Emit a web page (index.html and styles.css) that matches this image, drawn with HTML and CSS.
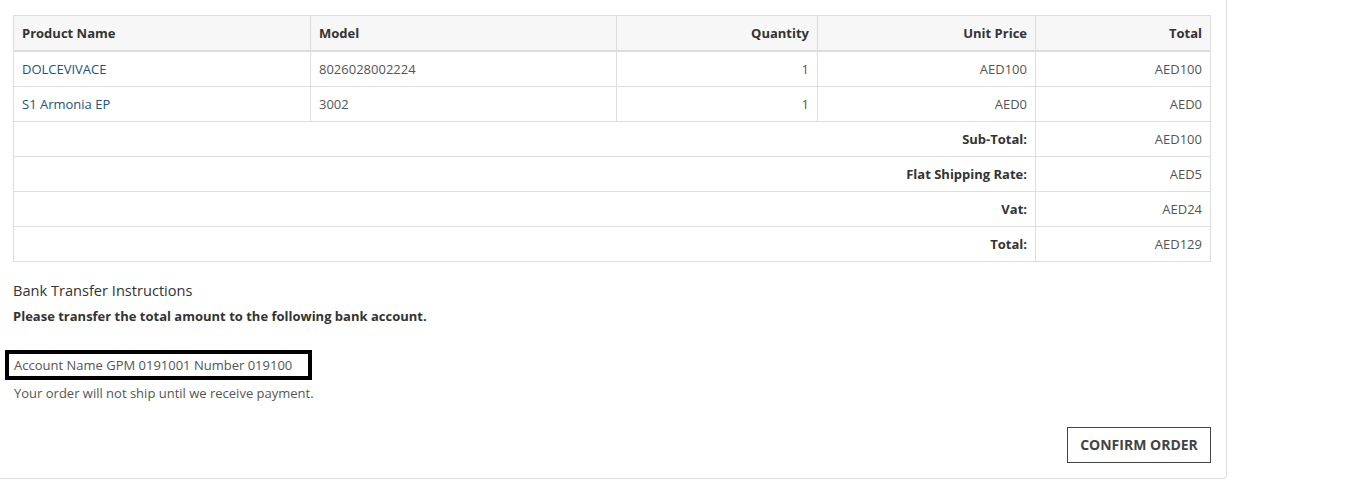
FILE: index.html
```html
<!DOCTYPE html>
<html>
<head>
<meta charset="utf-8">
<link rel="stylesheet" href="styles.css">
</head>
<body>
<div class="panel">
  <table class="cart">
    <colgroup>
      <col class="c1"><col class="c2"><col class="c3"><col class="c4"><col class="c5">
    </colgroup>
    <thead>
      <tr>
        <th class="left">Product Name</th>
        <th class="left">Model</th>
        <th class="right">Quantity</th>
        <th class="right">Unit Price</th>
        <th class="right">Total</th>
      </tr>
    </thead>
    <tbody>
      <tr>
        <td class="left"><a href="#">DOLCEVIVACE</a></td>
        <td class="left">8026028002224</td>
        <td class="right">1</td>
        <td class="right">AED100</td>
        <td class="right">AED100</td>
      </tr>
      <tr>
        <td class="left"><a href="#">S1 Armonia EP</a></td>
        <td class="left">3002</td>
        <td class="right">1</td>
        <td class="right">AED0</td>
        <td class="right">AED0</td>
      </tr>
    </tbody>
    <tfoot>
      <tr><td colspan="4" class="right"><b>Sub-Total:</b></td><td class="right">AED100</td></tr>
      <tr><td colspan="4" class="right"><b>Flat Shipping Rate:</b></td><td class="right">AED5</td></tr>
      <tr><td colspan="4" class="right"><b>Vat:</b></td><td class="right">AED24</td></tr>
      <tr><td colspan="4" class="right"><b>Total:</b></td><td class="right">AED129</td></tr>
    </tfoot>
  </table>
  <h2 class="bank-title">Bank Transfer Instructions</h2>
  <p class="bank-lead">Please transfer the total amount to the following bank account.</p>
  <div class="account-box">Account Name GPM 0191001 Number 019100</div>
  <p class="note">Your order will not ship until we receive payment.</p>
  <div class="actions">
    <button class="confirm" type="button">CONFIRM ORDER</button>
  </div>
</div>
</body>
</html>
```

FILE: styles.css
```css
* { box-sizing: border-box; }
html, body { margin: 0; padding: 0; background: #fff; }
body {
  font-family: "Open Sans", "Liberation Sans", sans-serif;
  font-size: 13px;
  color: #555;
}
.panel {
  width: 1227px;
  padding: 15px 15px 15px 13px;
  border-right: 1px solid #ddd;
  border-bottom: 1px solid #ddd;
  border-bottom-right-radius: 4px;
}
.cart {
  width: 1197px;
  border-collapse: collapse;
  border: 1px solid #ddd;
  table-layout: fixed;
}
.c1 { width: 297px; }
.c2 { width: 306px; }
.c3 { width: 201px; }
.c4 { width: 218px; }
.c5 { width: 175px; }
.cart th, .cart td {
  border: 1px solid #ddd;
  padding: 8px 8px;
  line-height: 18px;
  height: 35px;
}
.cart th {
  background: #f7f7f7;
  color: #333;
  font-weight: 700;
  border-bottom: 2px solid #ddd;
  height: 35px;
  padding-top: 8px;
  padding-bottom: 7px;
}
.cart td b { color: #333; font-weight: 700; }
.left { text-align: left; }
.right { text-align: right; }
.cart a { color: #23527c; text-decoration: none; }
.bank-title {
  margin: 18px 0 0;
  font-size: 14.6px;
  line-height: 20px;
  font-weight: 400;
  color: #333;
}
.bank-lead {
  margin: 7px 0 0;
  font-weight: 700;
  color: #333;
  line-height: 18px;
}
.account-box {
  margin: 25px 0 0 -8px;
  width: 307px;
  border: 4px solid #000;
  padding: 0 5px;
  line-height: 22px;
  color: #555;
}
.note {
  margin: 4px 0 0 1px;
  line-height: 18px;
}
.actions {
  display: flex;
  justify-content: flex-end;
  margin-top: 25px;
}
.confirm {
  font-family: "Open Sans", "Liberation Sans", sans-serif;
  font-size: 14px;
  font-weight: 700;
  color: #444;
  background: #fff;
  border: 1px solid #444;
  height: 36px;
  width: 144px;
  padding: 0;
  cursor: pointer;
}
```
